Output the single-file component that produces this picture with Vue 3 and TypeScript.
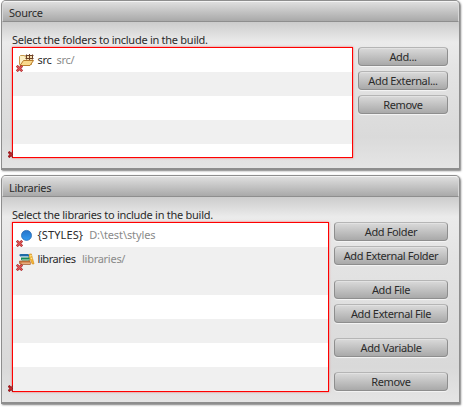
<script setup lang="ts">
interface Entry {
  icon: 'folder' | 'variable' | 'books'
  name: string
  path: string
}

interface Section {
  id: string
  title: string
  label: string
  entries: Entry[]
  groups: string[][]
}

const sections: Section[] = [
  {
    id: 'source',
    title: 'Source',
    label: 'Select the folders to include in the build.',
    entries: [{ icon: 'folder', name: 'src', path: 'src/' }],
    groups: [['Add...', 'Add External...', 'Remove']],
  },
  {
    id: 'libraries',
    title: 'Libraries',
    label: 'Select the libraries to include in the build.',
    entries: [
      { icon: 'variable', name: '{STYLES}', path: 'D:\\test\\styles' },
      { icon: 'books', name: 'libraries', path: 'libraries/' },
    ],
    groups: [['Add Folder', 'Add External Folder'], ['Add File', 'Add External File'], ['Add Variable'], ['Remove']],
  },
]
</script>

<template>
  <main class="page">
    <section v-for="s in sections" :key="s.id" class="panel" :class="s.id">
      <h2 class="title">{{ s.title }}</h2>
      <div class="body">
        <p class="label">{{ s.label }}</p>
        <div class="content">
          <div class="list">
            <div v-for="e in s.entries" :key="e.name" class="row" :class="e.icon">
              <span class="icon">
                <svg v-if="e.icon === 'folder'" width="16" height="16" viewBox="0 0 16 16">
                  <path d="M.5 12.5v-8l1-1h4l1 1.500h6v7.500z" fill="#fdf0c4" stroke="#c79a4c" />
                  <path d="M7.500 3.500h6v5h-6z" fill="#f6dfb0" />
                  <path d="M7.500 2.500v5M10.500 2v6M13.500 2.500v5M6.500 3.500h8M6.500 6.500h8" fill="none" stroke="#6e4226" />
                  <path d="M1 13.500l3.500-5h10l-3.500 5z" fill="#f9d98c" stroke="#b97c2c" />
                </svg>
                <svg v-else-if="e.icon === 'variable'" width="16" height="16" viewBox="0 0 16 16">
                  <defs>
                    <linearGradient id="ball" x1="0" y1="0" x2="0" y2="1">
                      <stop offset="0" stop-color="#2673c8" />
                      <stop offset="1" stop-color="#349cf2" />
                    </linearGradient>
                  </defs>
                  <circle cx="7.5" cy="8.4" r="5" fill="url(#ball)" stroke="#2c6cb4" stroke-width=".8" />
                </svg>
                <svg v-else width="16" height="16" viewBox="0 0 16 16">
                  <path d="M9.500 3.500l2.800-.6 2.700 10h-1.800l-2.300-5.500-.9 5z" fill="#f5b93c" stroke="#d98f18" stroke-width=".7" />
                  <path d="M11 5l1.700-.4M11.700 7.500l1.700-.4" stroke="#fff0a5" />
                  <path d="M0 4l1.500-1H9l1 1v2H2z" fill="#1f6ba8" />
                  <path d="M2 5.500h7.500" stroke="#b9d6e4" stroke-width=".8" />
                  <path d="M2 6.500h8.500v3H3L2 8.500z" fill="#168a5b" />
                  <path d="M3 8.800h7.500" stroke="#bfe2c8" stroke-width=".8" />
                  <path d="M.5 10h10l.8 1v2.500H2l-1.500-1z" fill="#cd7b42" stroke="#985023" stroke-width=".6" />
                  <path d="M2.500 12.200h8.500" stroke="#f4c29b" />
                </svg>
                <svg class="error" width="7" height="7" viewBox="0 0 7 7">
                  <path d="M.8.8l5.400 5.400M6.200.8L.8 6.200" stroke="#a3262a" stroke-width="2.6" />
                  <path d="M1 1l5 5M6 1L1 6" stroke="#e25858" stroke-width="1.2" />
                </svg>
              </span>
              <span class="name">{{ e.name }}</span>
              <span class="path">{{ e.path }}</span>
            </div>
            <svg class="marker" width="5" height="7" viewBox="0 0 5 7">
              <path d="M.5.8l5.400 5.400M5.900.8L.5 6.200" stroke="#96171b" stroke-width="2.5" />
              <path d="M1 1.500l4 4M5 1.500l-4 4" stroke="#d93a3c" stroke-width=".8" />
            </svg>
          </div>
          <div class="actions">
            <div v-for="(g, i) in s.groups" :key="i" class="group">
              <button v-for="b in g" :key="b" type="button">{{ b }}</button>
            </div>
          </div>
        </div>
      </div>
    </section>
  </main>
</template>

<style>
body {
  background: #fff;
  overflow: hidden;
}
</style>

<style scoped>
.page {
  box-sizing: border-box;
  width: 463px;
  height: 408px;
  padding: 0 4px 0 1px;
  display: flex;
  flex-direction: column;
  gap: 5px;
  overflow: hidden;
  font: 11px/14px "Noto Sans", sans-serif;
  letter-spacing: -0.27px;
  color: #2b2b2b;
}
.panel {
  box-sizing: border-box;
  width: 459px;
  height: 170px;
  border: 1px solid #8e8e8e;
  border-bottom-width: 2px;
  border-radius: 5px 5px 0 0;
  box-shadow: 1px 1px 2px rgba(0, 0, 0, 0.5);
  background: #dedede;
}
.panel.libraries {
  height: 229px;
}
.title {
  box-sizing: border-box;
  height: 21px;
  margin: 0;
  padding: 4px 6px 0;
  border: 1px solid #d8d8d8;
  border-top-color: #f4f4f4;
  border-bottom-color: #8e8e8e;
  border-radius: 4px 4px 0 0;
  background: linear-gradient(#dedede, #a9a9a9);
  font-size: 11px;
  font-weight: 400;
  line-height: 14px;
}
.body {
  box-sizing: border-box;
  height: 146px;
  padding: 11px 11px 0 10px;
  background: linear-gradient(#cccccc 0, #ebebeb 20px, #e4e4e4 45px, #dadada 115px, #e5e5e5 100%);
}
.libraries .body {
  height: 205px;
  background: linear-gradient(#cccccc 0, #ebebeb 20px, #e4e4e4 60px, #d9d9d9 170px, #e5e5e5 100%);
}
.label {
  margin: 0;
  height: 14px;
  white-space: nowrap;
}
.content {
  display: flex;
  gap: 5px;
}
.list {
  position: relative;
  box-sizing: border-box;
  width: 341px;
  height: 111px;
  border: 1px solid #f00;
  box-shadow: 0 0 2px rgba(255, 0, 0, 0.55);
  background: repeating-linear-gradient(#fff 0 24px, #f0f0f0 24px 48px);
}
.libraries .list {
  width: 317px;
  height: 170px;
  background: linear-gradient(
    #fff 0 24px,
    #f0f0f0 24px 72px,
    #fff 72px 96px,
    #f0f0f0 96px 120px,
    #fff 120px 144px,
    #f0f0f0 144px
  );
}
.row {
  display: flex;
  align-items: center;
  height: 24px;
  padding-left: 6px;
  white-space: nowrap;
}
.icon {
  position: relative;
  width: 16px;
  height: 16px;
  margin-right: 2.5px;
}
.icon svg {
  display: block;
}
.icon .error {
  position: absolute;
  left: -3px;
  top: 13px;
}
.path {
  margin-left: 5px;
  color: #8a8a8a;
}
.variable .name {
  letter-spacing: 0.12px;
}
.variable .path {
  margin-left: 6px;
  letter-spacing: -0.1px;
}
.books .name {
  letter-spacing: -0.42px;
}
.books .path {
  margin-left: 6.5px;
}
.marker {
  position: absolute;
  left: -5px;
  bottom: -1px;
}
.actions {
  flex: 1;
  display: flex;
  flex-direction: column;
  gap: 15px;
}
.group {
  display: flex;
  flex-direction: column;
  gap: 5px;
}
button {
  box-sizing: border-box;
  height: 19px;
  padding: 0;
  border: 1px solid #8e8e8e;
  border-top-color: #b5b5b5;
  border-radius: 4px;
  background: linear-gradient(#dadada, #a9a9a9);
  box-shadow: inset 0 1px #e2e2e2, 0 1px 1px #f5f5f5;
  font: 11px/15px "Noto Sans", sans-serif;
  letter-spacing: -0.36px;
  color: #2b2b2b;
  white-space: nowrap;
}
</style>
